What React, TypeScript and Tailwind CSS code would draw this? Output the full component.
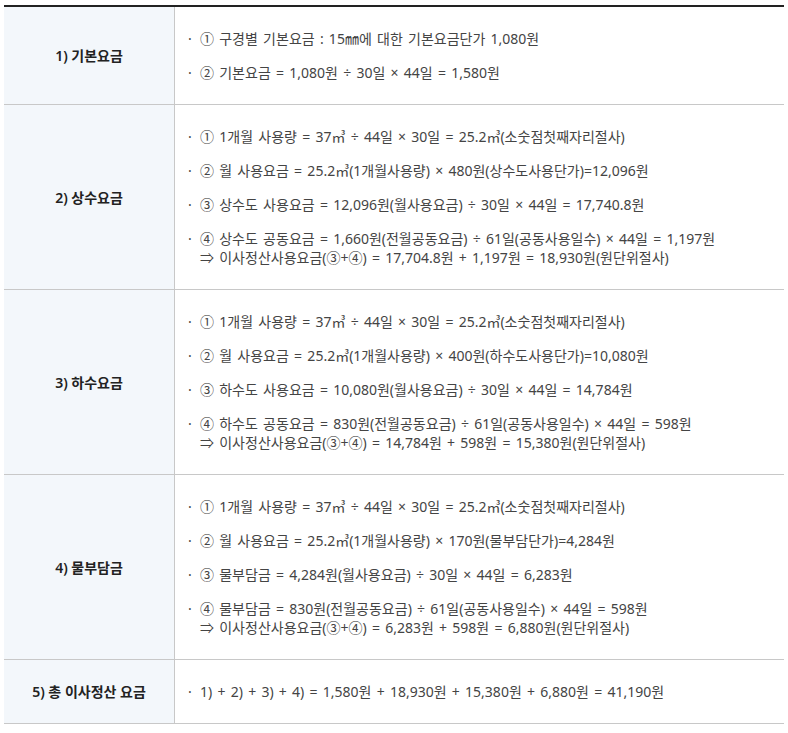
import React from "react";

type Item = string[];
type Row = { title: string; items: Item[] };

const rows: Row[] = [
  {
    title: "1) 기본요금",
    items: [
      ["① 구경별 기본요금 : 15㎜에 대한 기본요금단가 1,080원"],
      ["② 기본요금 = 1,080원 ÷ 30일 × 44일 = 1,580원"],
    ],
  },
  {
    title: "2) 상수요금",
    items: [
      ["① 1개월 사용량 = 37㎥ ÷ 44일 × 30일 = 25.2㎥(소숫점첫째자리절사)"],
      ["② 월 사용요금 = 25.2㎥(1개월사용량) × 480원(상수도사용단가)=12,096원"],
      ["③ 상수도 사용요금 = 12,096원(월사용요금) ÷ 30일 × 44일 = 17,740.8원"],
      [
        "④ 상수도 공동요금 = 1,660원(전월공동요금) ÷ 61일(공동사용일수) × 44일 = 1,197원",
        "⇒ 이사정산사용요금(③+④) = 17,704.8원 + 1,197원 = 18,930원(원단위절사)",
      ],
    ],
  },
  {
    title: "3) 하수요금",
    items: [
      ["① 1개월 사용량 = 37㎥ ÷ 44일 × 30일 = 25.2㎥(소숫점첫째자리절사)"],
      ["② 월 사용요금 = 25.2㎥(1개월사용량) × 400원(하수도사용단가)=10,080원"],
      ["③ 하수도 사용요금 = 10,080원(월사용요금) ÷ 30일 × 44일 = 14,784원"],
      [
        "④ 하수도 공동요금 = 830원(전월공동요금) ÷ 61일(공동사용일수) × 44일 = 598원",
        "⇒ 이사정산사용요금(③+④) = 14,784원 + 598원 = 15,380원(원단위절사)",
      ],
    ],
  },
  {
    title: "4) 물부담금",
    items: [
      ["① 1개월 사용량 = 37㎥ ÷ 44일 × 30일 = 25.2㎥(소숫점첫째자리절사)"],
      ["② 월 사용요금 = 25.2㎥(1개월사용량) × 170원(물부담단가)=4,284원"],
      ["③ 물부담금 = 4,284원(월사용요금) ÷ 30일 × 44일 = 6,283원"],
      [
        "④ 물부담금 = 830원(전월공동요금) ÷ 61일(공동사용일수) × 44일 = 598원",
        "⇒ 이사정산사용요금(③+④) = 6,283원 + 598원 = 6,880원(원단위절사)",
      ],
    ],
  },
  {
    title: "5) 총 이사정산 요금",
    items: [["1) + 2) + 3) + 4) = 1,580원 + 18,930원 + 15,380원 + 6,880원 = 41,190원"]],
  },
];

export default function App() {
  return (
    <div
      className="bg-white w-[788px] h-[733px] pt-[5px] pl-[4px]"
      style={{ fontFamily: '"Noto Sans", "Noto Sans CJK KR", sans-serif' }}
    >
      <div className="w-[780px] border-t-2 border-[#222] border-b border-b-[#c8c8c8]">
        {rows.map((row, ri) => (
          <div
            key={ri}
            className={`grid grid-cols-[171px_1fr] ${ri > 0 ? "border-t border-[#c8c8c8]" : ""}`}
          >
            <div className="bg-[#f3f7fb] border-r border-[#c8c8c8] flex items-center justify-center text-[14px] font-semibold text-[#222]">
              {row.title}
            </div>
            <div className="py-[22px] pl-[13px] flex flex-col gap-[15px] text-[14px] leading-[19px] text-[#444] [word-spacing:1.6px]">
              {row.items.map((lines, ii) => (
                <div key={ii} className="flex">
                  <span className="w-[12px] shrink-0">·</span>
                  <div className="flex flex-col">
                    {lines.map((l, li) => (
                      <span key={li} className="whitespace-nowrap">
                        {l}
                      </span>
                    ))}
                  </div>
                </div>
              ))}
            </div>
          </div>
        ))}
      </div>
    </div>
  );
}
